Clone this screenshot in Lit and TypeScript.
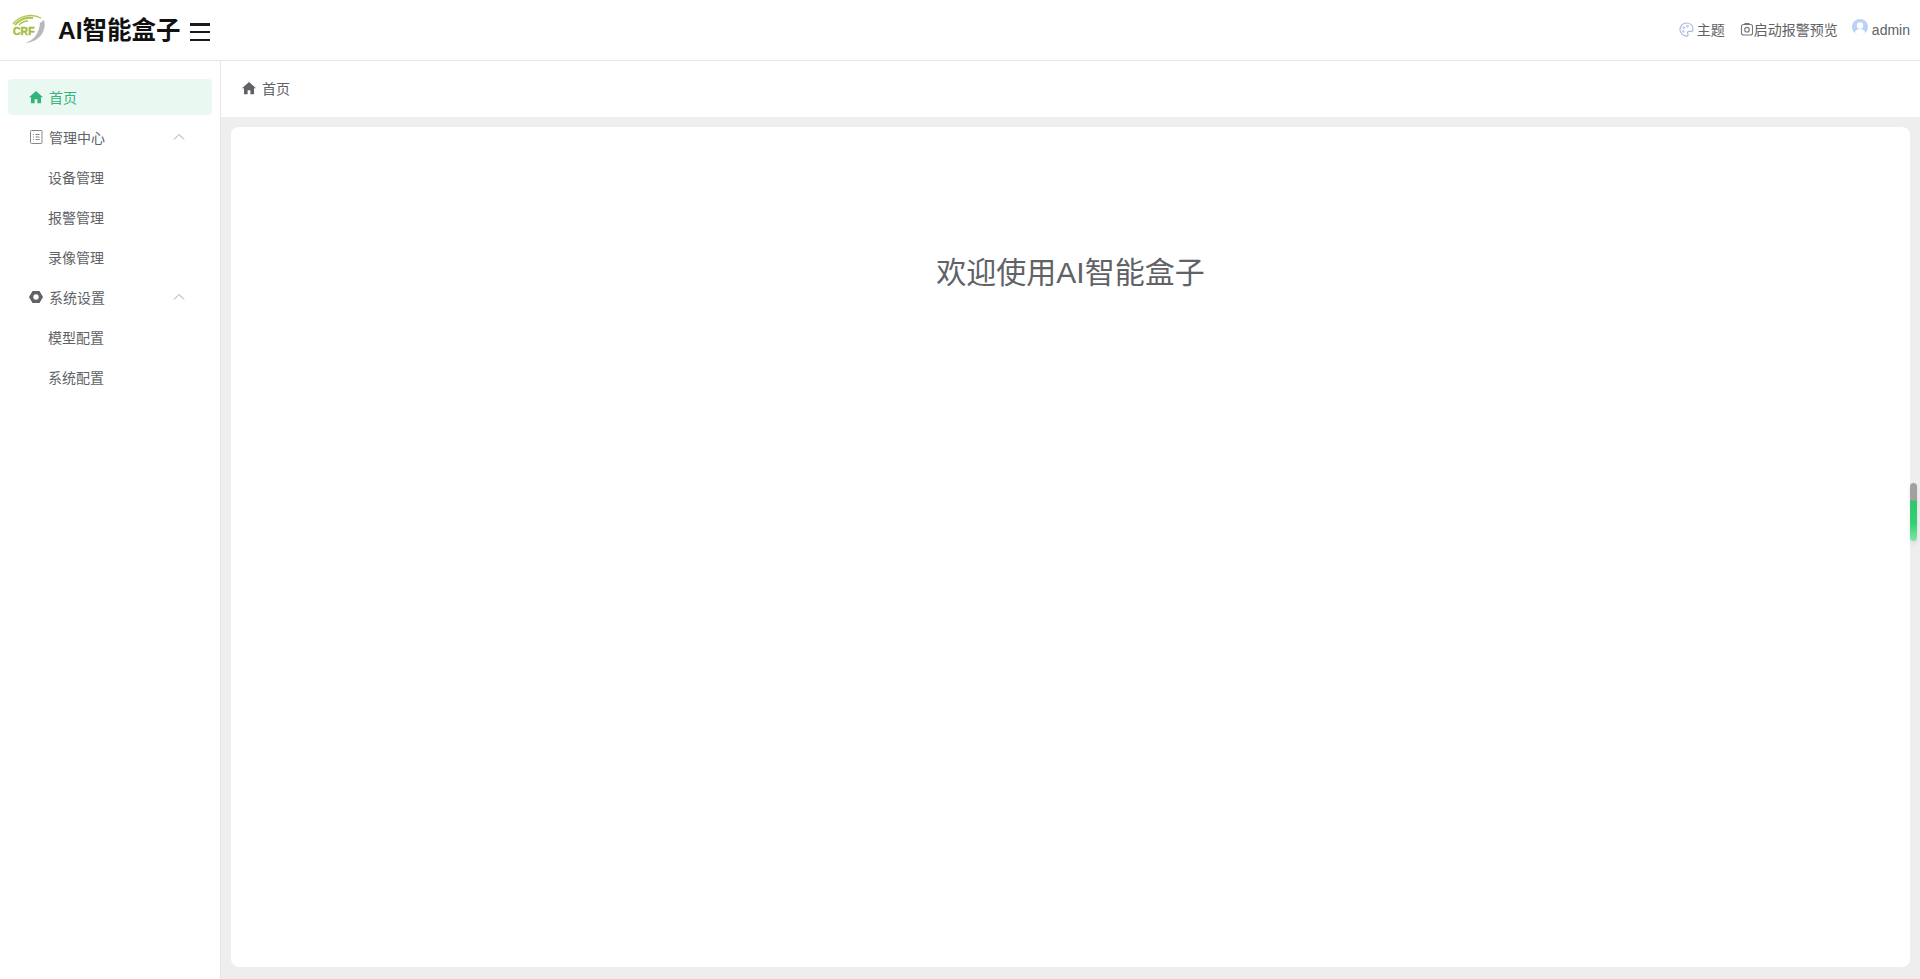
import { LitElement, html, css, svg } from "lit";
import { customElement } from "lit/decorators.js";

const home = svg`<path d="M8 1.600 .9 8h2v6.200h3.700V10h2.800v4.200h3.700V8h2z" fill="currentColor"/>`;

@customElement("app-root")
export class AppRoot extends LitElement {
  static styles = css`
    :host { display: flex; flex-direction: column; width: 1920px; height: 979px; overflow: hidden; background: #fff;
      font-family: "Liberation Sans", "Noto Sans CJK SC", sans-serif; color: #606266; font-size: 14px; }
    .header { height: 60px; flex: none; display: flex; align-items: center; border-bottom: 1px solid #e6e6e6; box-sizing: content-box; }
    .logo { width: 36px; height: 32px; margin-left: 11px; flex: none; }
    .title { margin-left: 11px; padding-top: 2px; font-size: 24.500px; font-weight: 700; color: #111; line-height: 58px; }
    .burger { width: 20px; height: 18px; margin: 4px 0 0 9px; display: flex; flex-direction: column; justify-content: space-between; }
    .burger i { display: block; height: 2.500px; background: #1a1a1a; }
    .right { margin-left: auto; display: flex; align-items: center; padding: 0 10px 2px 0; color: #606266; font-size: 14px; }
    .act { display: flex; align-items: center; }
    .act svg { flex: none; }
    .theme { margin-right: 15px; }
    .alarm { margin-right: 14px; }
    .theme svg { margin-right: 3px; }
    .user { padding-top: 2px; }
    .avatar { margin: -6px 4px 0 0; }
    .body { flex: 1; display: flex; min-height: 0; }
    .side { flex: none; border-right: 1px solid #e6e6e6; padding: 18px 8px 0; box-sizing: content-box; width: 204px; }
    .item { height: 36px; margin-bottom: 4px; display: flex; align-items: center; padding-left: 21px; border-radius: 4px; position: relative; }
    .item.active { background: #e9f8f1; color: #33b47a; }
    .item .ic { width: 14px; height: 14px; margin-right: 6px; flex: none; }
    .item.sub { padding-left: 40px; }
    .chev { position: absolute; right: 27px; top: 14px; }
    .main { flex: 1; display: flex; flex-direction: column; min-width: 0; background: #eeeeee; }
    .crumb { height: 56px; flex: none; box-sizing: border-box; padding: 0 0 2px 21px; background: #fff; display: flex; align-items: center; color: #606266; }
    .crumb svg { width: 14px; height: 14px; margin-right: 6px; }
    .content { flex: 1; margin: 10px 10px 12px 10px; background: #fff; border-radius: 8px; display: flex; justify-content: center; }
    .welcome { margin: 0; padding-top: 126px; font-size: 30px; font-weight: 400; line-height: 40px; color: #606266; }
    .thumb { position: absolute; right: 3px; top: 483px; width: 7px; height: 58px; border-radius: 3.500px; overflow: hidden;
      box-shadow: 0 3px 5px rgba(0, 0, 0, .08);
      background: linear-gradient(#a0a0a0 0 17px, #2fc66e 18px, #35cf76 70%, #7fe6a6 100%); }
  `;

  render() {
    const chev = html`<svg class="chev" width="12" height="8" viewBox="0 0 12 8"><path d="M1 6.500 6 1.500l5 5" fill="none" stroke="#a0a3a8" stroke-width="1"/></svg>`;
    return html`
      <div class="header">
        <svg class="logo" viewBox="0 0 36 32">
          <path d="M2 10C8 2 20 -1 30 4" fill="none" stroke="#a9c64a" stroke-width="1.300"/>
          <path d="M4 11C9 5 15 3 22 4" fill="none" stroke="#a9c64a" stroke-width="2"/>
          <path d="M8 11c3-3 6-4 9-4" fill="none" stroke="#a9c64a" stroke-width="1.500"/>
          <path d="M33 6c3 10-4 22-19 23 9-3 14-9 15-20z" fill="#b8b8b8"/>
          <text x="2" y="21" font-size="10.500" font-weight="700" fill="#a2bd3c" stroke="#a2bd3c" stroke-width=".4" font-family="Liberation Sans">CRF</text>
        </svg>
        <span class="title">AI智能盒子</span>
        <div class="burger"><i></i><i></i><i></i></div>
        <div class="right">
          <span class="act theme">
            <svg width="15" height="15" viewBox="0 0 16 16"><path d="M8 1a7 7 0 0 0 0 14c2 0 2-1.500 1.300-2.500-.7-1.100 0-2.500 1.700-2.500H13c1.500 0 2-1 2-2.500C15 3.500 12 1 8 1z" fill="none" stroke="#aab8dc" stroke-width="1.200"/><circle cx="5" cy="6" r="1" fill="none" stroke="#aab8dc"/><circle cx="9" cy="4.500" r="1" fill="none" stroke="#aab8dc"/><circle cx="4.500" cy="10" r="1" fill="none" stroke="#aab8dc"/></svg>主题</span>
          <span class="act alarm">
            <svg width="14" height="14" viewBox="0 0 14 14"><rect x="1.500" y="2.500" width="11" height="10.500" rx="2" fill="none" stroke="#777" stroke-width="1.100"/><circle cx="7" cy="7.700" r="2.300" fill="none" stroke="#777" stroke-width="1.100"/><rect x="4.500" y="1" width="5" height="2" fill="#777"/></svg>启动报警预览</span>
          <span class="act user">
            <svg class="avatar" width="16" height="16" viewBox="0 0 16 16"><circle cx="8" cy="8" r="8" fill="#b9d2f5"/><circle cx="8" cy="6.500" r="3.200" fill="#fff"/><path d="M2.500 14c1-3 3-4 5.500-4s4.500 1 5.500 4a8 8 0 0 1-11 0z" fill="#fff"/></svg>admin</span>
        </div>
      </div>
      <div class="body">
        <nav class="side">
          <div class="item active"><svg class="ic" viewBox=".9 1.300 14.200 13">${home}</svg>首页</div>
          <div class="item"><svg class="ic" viewBox="0 0 14 14"><rect x="1.500" y=".5" width="11.500" height="13" rx="1" fill="none" stroke="#888" stroke-width="1"/><path d="M4 4.500h1M6.500 4.500H10.500M4 7h1M6.500 7H10.500M4 9.500h1M6.500 9.500H10.500" stroke="#888" stroke-width="1"/></svg>管理中心${chev}</div>
          <div class="item sub">设备管理</div>
          <div class="item sub">报警管理</div>
          <div class="item sub">录像管理</div>
          <div class="item"><svg class="ic" viewBox="0 0 14 14"><path fill-rule="evenodd" d="M3.500 .9h7L14 7l-3.500 6.100h-7L0 7zM7 4.300a2.700 2.700 0 1 0 0 5.400 2.700 2.700 0 0 0 0-5.400z" fill="#606266"/></svg>系统设置${chev}</div>
          <div class="item sub">模型配置</div>
          <div class="item sub">系统配置</div>
        </nav>
        <div class="main">
          <div class="crumb"><svg viewBox=".9 1.300 14.200 13">${home}</svg>首页</div>
          <div class="content"><h1 class="welcome">欢迎使用AI智能盒子</h1></div>
        </div>
      </div>
      <div class="thumb"></div>
    `;
  }
}
